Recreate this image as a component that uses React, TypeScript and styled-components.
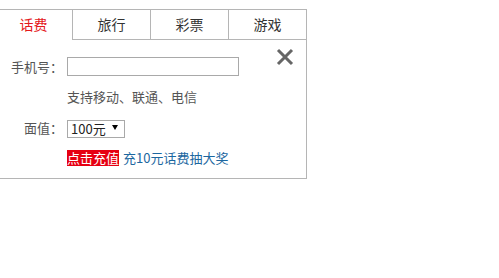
import React, { useState } from 'react';
import styled, { createGlobalStyle } from 'styled-components';

const GlobalStyle = createGlobalStyle`
  body {
    margin: 0;
    background: #fff;
    font-family: "Microsoft YaHei", "Noto Sans CJK SC", "Liberation Sans", sans-serif;
  }
`;

const Box = styled.div`
  position: relative;
  margin: 9px 0 0 -6px;
  width: 313px;
  box-sizing: border-box;
  border: 1px solid #b5b5b5;
  font-size: 13px;
  color: #555;
`;

const TabBar = styled.ul`
  display: flex;
  margin: 0;
  padding: 0;
  list-style: none;
`;

const Tab = styled.li<{ $active: boolean }>`
  flex: 1;
  height: 29px;
  line-height: 28px;
  text-align: center;
  font-size: 14px;
  cursor: pointer;
  color: ${(p) => (p.$active ? '#e4191c' : '#333')};
  border-bottom: 1px solid ${(p) => (p.$active ? 'transparent' : '#b5b5b5')};
  & + & {
    border-left: 1px solid #b5b5b5;
  }
`;

const Panel = styled.div`
  display: flex;
  flex-direction: column;
  padding: 17px 0 11px;
`;

const Row = styled.div<{ $gap?: number }>`
  display: flex;
  align-items: center;
  margin-top: ${(p) => p.$gap ?? 0}px;
`;

const Label = styled.label`
  width: 72px;
  padding-right: 4px;
  box-sizing: border-box;
  text-align: right;
  white-space: nowrap;
`;

const PhoneInput = styled.input`
  width: 172px;
  height: 19px;
  box-sizing: border-box;
  border: 1px solid #a9a9a9;
  padding: 0 3px;
  outline: none;
`;

const Hint = styled.span`
  margin-left: 72px;
  line-height: 20px;
`;

const SelectWrap = styled.span`
  position: relative;
  display: inline-block;
  height: 18px;
`;

const Select = styled.select`
  appearance: none;
  width: 58px;
  height: 18px;
  box-sizing: border-box;
  border: 1px solid #a9a9a9;
  border-radius: 0;
  background: #fff;
  padding: 0 0 0 3px;
  font-family: inherit;
  font-size: 13px;
  color: #222;
  line-height: 16px;
`;

const Arrow = styled.span`
  position: absolute;
  right: 7px;
  top: 6px;
  width: 0;
  height: 0;
  border-left: 3px solid transparent;
  border-right: 3px solid transparent;
  border-top: 5px solid #000;
  pointer-events: none;
`;

const Submit = styled.button`
  margin-left: 72px;
  border: 0;
  padding: 0;
  height: 16px;
  line-height: 16px;
  background: #e60012;
  color: #fff;
  font-family: inherit;
  font-size: 13px;
  cursor: pointer;
`;

const Promo = styled.a`
  margin-left: 4px;
  color: #1c679f;
  text-decoration: none;
  font-size: 13px;
`;

const Close = styled.button`
  position: absolute;
  top: 37px;
  right: 11px;
  width: 20px;
  height: 20px;
  padding: 0;
  border: 0;
  background: none;
  cursor: pointer;
`;

const tabs = ['话费', '旅行', '彩票', '游戏'];

export default function App() {
  const [active, setActive] = useState(0);
  return (
    <>
      <GlobalStyle />
      <Box>
        <TabBar>
          {tabs.map((t, i) => (
            <Tab key={t} $active={i === active} onClick={() => setActive(i)}>
              {t}
            </Tab>
          ))}
        </TabBar>
        <Close aria-label="关闭">
          <svg width="20" height="20" viewBox="0 0 20 20">
            <path d="M3 3 L17 17 M17 3 L3 17" stroke="#666" strokeWidth="3" />
          </svg>
        </Close>
        <Panel>
          <Row>
            <Label>手机号：</Label>
            <PhoneInput type="text" />
          </Row>
          <Row $gap={11}>
            <Hint>支持移动、联通、电信</Hint>
          </Row>
          <Row $gap={11}>
            <Label>面值：</Label>
            <SelectWrap>
              <Select defaultValue="100">
                <option value="50">50元</option>
                <option value="100">100元</option>
              </Select>
              <Arrow />
            </SelectWrap>
          </Row>
          <Row $gap={11}>
            <Submit>点击充值</Submit>
            <Promo href="#">充10元话费抽大奖</Promo>
          </Row>
        </Panel>
      </Box>
    </>
  );
}
